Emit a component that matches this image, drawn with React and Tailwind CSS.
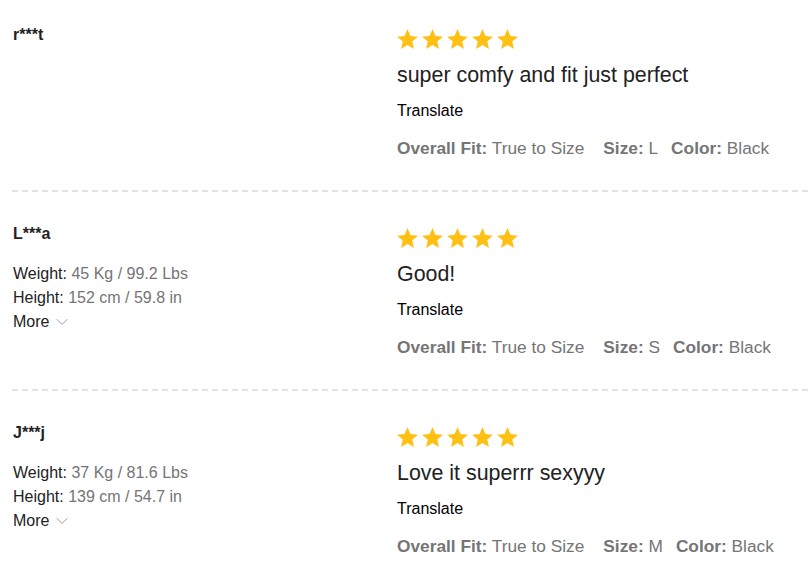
import { ChevronDown } from 'lucide-react';

const reviews = [
  {
    id: 1,
    name: 'r***t',
    body: 'super comfy and fit just perfect',
    fit: 'True to Size',
    size: 'L',
    color: 'Black',
  },
  {
    id: 2,
    name: 'L***a',
    weight: '45 Kg / 99.2 Lbs',
    height: '152 cm / 59.8 in',
    body: 'Good!',
    fit: 'True to Size',
    size: 'S',
    color: 'Black',
  },
  {
    id: 3,
    name: 'J***j',
    weight: '37 Kg / 81.6 Lbs',
    height: '139 cm / 54.7 in',
    body: 'Love it superrr sexyyy',
    fit: 'True to Size',
    size: 'M',
    color: 'Black',
  },
];

function Star() {
  return (
    <svg viewBox="0 0 24 24" className="w-[25px] h-[25px] shrink-0" fill="#fec013">
      <path d="M12 17.27L18.18 21l-1.64-7.03L22 9.24l-7.19-.61L12 2 9.19 8.63 2 9.24l5.46 4.73L5.82 21z" />
    </svg>
  );
}

function Review({ review, first }) {
  return (
    <div className={`flex pl-[13px] ${first ? 'pt-[27px]' : 'pt-[34px]'} pb-[30px]`}>
      <div className="w-[384px] shrink-0">
        <div className="text-[16px] leading-4 font-bold text-[#222]">{review.name}</div>
        {review.weight && (
          <div className="mt-5 text-[16px] leading-6">
            <div className="text-[#222]">
              Weight: <span className="text-[#757575]">{review.weight}</span>
            </div>
            <div className="text-[#222]">
              Height: <span className="text-[#757575]">{review.height}</span>
            </div>
            <div className="flex items-center gap-[3px] text-[#222]">
              More
              <ChevronDown className="w-5 h-5 text-[#999]" strokeWidth={1.2} />
            </div>
          </div>
        )}
      </div>
      <div className="flex-1">
        <div className="flex -ml-[2px] h-6 items-center">
          {[0, 1, 2, 3, 4].map((i) => (
            <Star key={i} />
          ))}
        </div>
        <p className="mt-[10px] text-[21.4px] leading-7 text-[#222]">{review.body}</p>
        <div className="mt-[12px] text-[16px] leading-5 text-black">Translate</div>
        <div className="mt-[15px] flex text-[17.3px] leading-6 text-[#757575]">
          <span className="mr-[19px]">
            <b>Overall Fit:</b> {review.fit}
          </span>
          <span className="mr-[13px]">
            <b>Size:</b> {review.size}
          </span>
          <span>
            <b>Color:</b> {review.color}
          </span>
        </div>
      </div>
    </div>
  );
}

export default function App() {
  return (
    <div className="w-[812px] h-[580px] overflow-hidden bg-white font-['Liberation_Sans',Arial,sans-serif]">
      {reviews.map((r, i) => (
        <div key={r.id}>
          {i > 0 && (
            <div className="ml-3 h-[2px] bg-[repeating-linear-gradient(to_right,#e3e3e3_0,#e3e3e3_6px,transparent_6px,transparent_10px)]" />
          )}
          <Review review={r} first={i === 0} />
        </div>
      ))}
    </div>
  );
}
